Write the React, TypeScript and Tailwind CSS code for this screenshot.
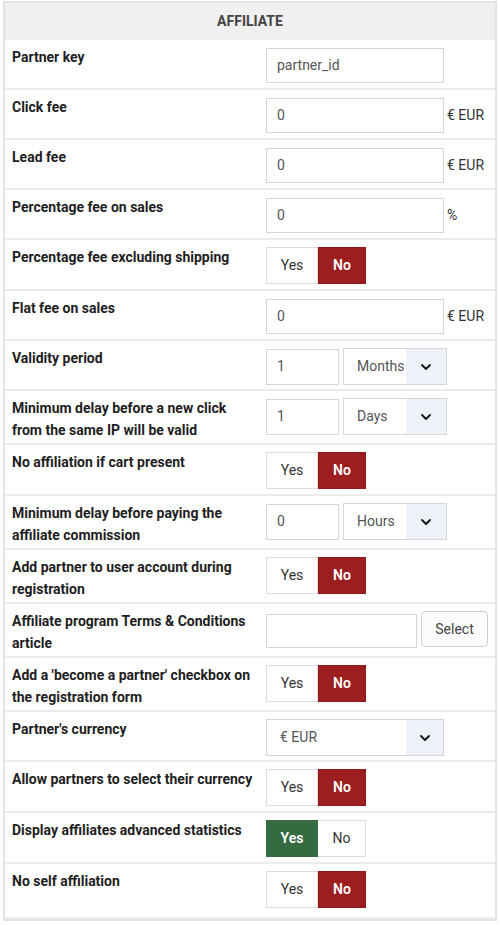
import React from "react";

type Ctl =
  | { kind: "input"; value: string; suffix?: string }
  | { kind: "toggle"; yes: boolean }
  | { kind: "period"; value: string; unit: string }
  | { kind: "select"; value: string }
  | { kind: "article" };

const rows: { label: string; ctl: Ctl }[] = [
  { label: "Partner key", ctl: { kind: "input", value: "partner_id" } },
  { label: "Click fee", ctl: { kind: "input", value: "0", suffix: "€ EUR" } },
  { label: "Lead fee", ctl: { kind: "input", value: "0", suffix: "€ EUR" } },
  { label: "Percentage fee on sales", ctl: { kind: "input", value: "0", suffix: "%" } },
  { label: "Percentage fee excluding shipping", ctl: { kind: "toggle", yes: false } },
  { label: "Flat fee on sales", ctl: { kind: "input", value: "0", suffix: "€ EUR" } },
  { label: "Validity period", ctl: { kind: "period", value: "1", unit: "Months" } },
  { label: "Minimum delay before a new click from the same IP will be valid", ctl: { kind: "period", value: "1", unit: "Days" } },
  { label: "No affiliation if cart present", ctl: { kind: "toggle", yes: false } },
  { label: "Minimum delay before paying the affiliate commission", ctl: { kind: "period", value: "0", unit: "Hours" } },
  { label: "Add partner to user account during registration", ctl: { kind: "toggle", yes: false } },
  { label: "Affiliate program Terms & Conditions article", ctl: { kind: "article" } },
  { label: "Add a 'become a partner' checkbox on the registration form", ctl: { kind: "toggle", yes: false } },
  { label: "Partner's currency", ctl: { kind: "select", value: "€ EUR" } },
  { label: "Allow partners to select their currency", ctl: { kind: "toggle", yes: false } },
  { label: "Display affiliates advanced statistics", ctl: { kind: "toggle", yes: true } },
  { label: "No self affiliation", ctl: { kind: "toggle", yes: false } },
];

function Chevron() {
  return (
    <svg width="16" height="16" viewBox="0 0 24 24" fill="none" stroke="#111" strokeWidth="2.7" strokeLinecap="round" strokeLinejoin="round">
      <path d="M6 9l6 6 6-6" />
    </svg>
  );
}

function Dropdown({ value, w, arrowW }: { value: string; w: number; arrowW: number }) {
  return (
    <div className="flex h-[37px] border border-[#d6d6d6] bg-white" style={{ width: w }}>
      <div className="flex-1 flex items-center pl-[13px] text-[14px] text-[#555]">{value}</div>
      <div className="flex items-center justify-center bg-[#eef2f8]" style={{ width: arrowW }}>
        <Chevron />
      </div>
    </div>
  );
}

function Control({ ctl }: { ctl: Ctl }) {
  switch (ctl.kind) {
    case "input":
      return (
        <div className="flex items-center mt-[2px]">
          <div className="w-[178px] h-[35px] border border-[#d6d6d6] flex items-center pl-[10px] text-[14px] text-[#555]">
            {ctl.value}
          </div>
          {ctl.suffix && <span className="ml-[3px] text-[14px] text-[#333]">{ctl.suffix}</span>}
        </div>
      );
    case "toggle":
      return (
        <div className="flex h-[37px] mt-[1px] mb-[3px] text-[14px]">
          <div
            className={
              ctl.yes
                ? "w-[52px] flex items-center justify-center bg-[#366a41] text-white font-semibold border border-[#366a41]"
                : "w-[52px] flex items-center justify-center bg-white text-[#333] border border-[#dcdcdc]"
            }
          >
            Yes
          </div>
          <div
            className={
              ctl.yes
                ? "w-[48px] flex items-center justify-center bg-white text-[#333] border border-l-0 border-[#dcdcdc]"
                : "w-[48px] flex items-center justify-center bg-[#9d1e1e] text-white font-semibold border border-[#8e1a1a]"
            }
          >
            No
          </div>
        </div>
      );
    case "period":
      return (
        <div className="flex items-center gap-[4px] mt-[1px]">
          <div className="w-[73px] h-[36px] border border-[#d6d6d6] flex items-center pl-[10px] text-[14px] text-[#555]">
            {ctl.value}
          </div>
          <Dropdown value={ctl.unit} w={104} arrowW={40} />
        </div>
      );
    case "select":
      return (
        <div className="mt-[1px]">
          <Dropdown value={ctl.value} w={178} arrowW={37} />
        </div>
      );
    case "article":
      return (
        <div className="flex items-start gap-[4px]">
          <div className="w-[151px] h-[34px] mt-[4px] border border-[#d6d6d6] bg-white" />
          <div className="w-[67px] h-[36px] mt-[1px] flex items-center justify-center rounded-[4px] border border-[#cfcfcf] bg-[#fcfcfc] text-[14px] text-[#444]">
            Select
          </div>
        </div>
      );
  }
}

export default function App() {
  return (
    <div className="w-[500px] h-[925px] bg-white px-[3px] pt-[1px]" style={{ fontFamily: "Roboto, 'Liberation Sans', sans-serif" }}>
      <div className="border-2 border-[#e3e3e3]">
        <div className="h-[37px] bg-[#f0f0f0] flex items-center justify-center text-[14px] font-bold text-[#444]">
          AFFILIATE
        </div>
        {rows.map((r, i) => (
          <div
            key={r.label}
            className={`flex border-b-2 border-[#ebebeb] pt-[6px] pl-[7px] ${i === rows.length - 1 ? "pb-[6px]" : "pb-[2px]"}`}
          >
            <div className="w-[254px] pr-[10px] text-[14px] leading-[22px] font-bold text-[#1e1e1e]">{r.label}</div>
            <div className="min-h-[40px]">
              <Control ctl={r.ctl} />
            </div>
          </div>
        ))}
      </div>
    </div>
  );
}
